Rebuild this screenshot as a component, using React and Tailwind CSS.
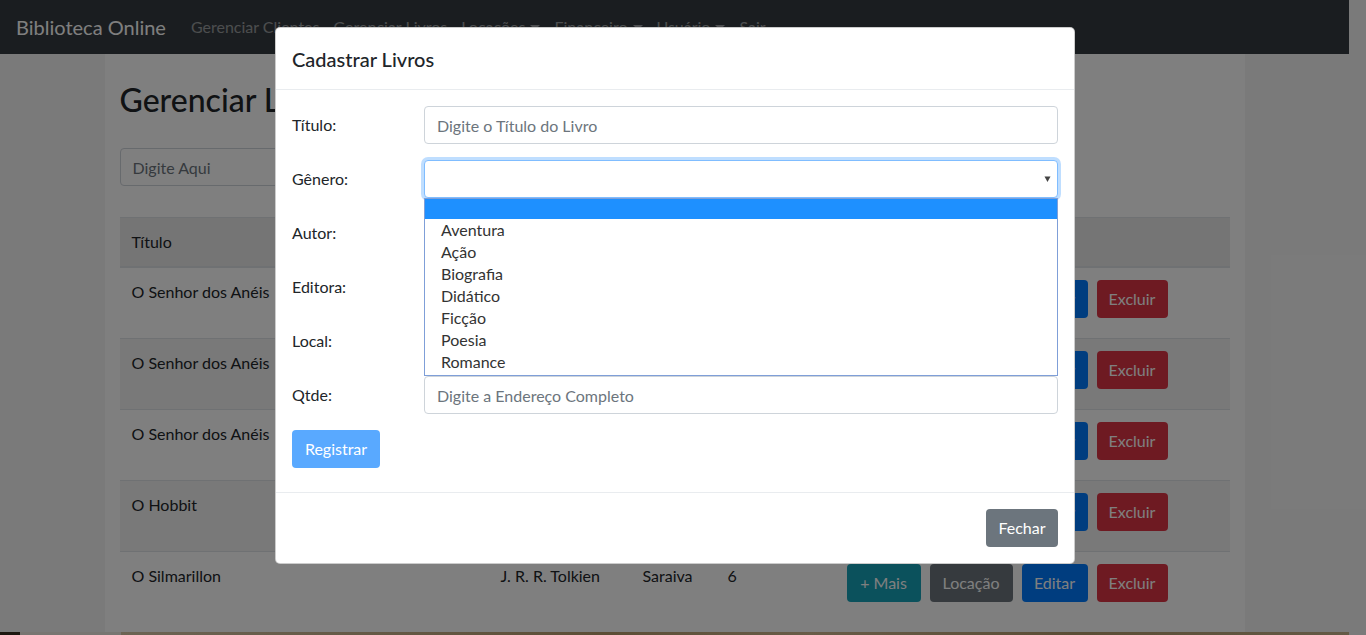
export default function App() {
  const rows = [
    { t: 'O Senhor dos Anéis', a: 'J. R. R. Tolkien', e: 'Saraiva', q: '6', striped: false },
    { t: 'O Senhor dos Anéis', a: 'J. R. R. Tolkien', e: 'Saraiva', q: '6', striped: true },
    { t: 'O Senhor dos Anéis', a: 'J. R. R. Tolkien', e: 'Saraiva', q: '6', striped: false },
    { t: 'O Hobbit', a: 'J. R. R. Tolkien', e: 'Saraiva', q: '6', striped: true },
    { t: 'O Silmarillon', a: 'J. R. R. Tolkien', e: 'Saraiva', q: '6', striped: false },
  ];
  const generos = ['Aventura', 'Ação', 'Biografia', 'Didático', 'Ficção', 'Poesia', 'Romance'];
  const caret = (
    <span className="inline-block ml-[5px] align-[3px] w-0 h-0 border-t-[5px] border-x-[5px] border-b-0 border-t-current border-x-transparent" />
  );
  const inputCls =
    'w-full h-[38px] rounded-[4px] border border-[#ced4da] bg-white px-3 text-[16px] text-[#495057] placeholder:text-[#6c757d] outline-none';

  return (
    <div className="relative h-[635px] overflow-hidden bg-[#f5f5f5] font-['Lato',sans-serif] text-[16px] text-[#212529]">
      {/* page */}
      <div className="w-[1349px] flex flex-col h-full">
        <nav className="h-[54px] shrink-0 bg-[#343a40] flex items-center pl-4">
          <span className="text-[20px] text-white mr-[25px]">Biblioteca Online</span>
          <div className="flex items-center gap-[14px] text-[16px] text-white/50">
            <span>Gerenciar Clientes</span>
            <span>Gerenciar Livros</span>
            <span>Locações{caret}</span>
            <span>Financeiro{caret}</span>
            <span>Usuário{caret}</span>
            <span>Sair</span>
          </div>
        </nav>
        <div className="mx-auto w-[1140px] h-[578px] shrink-0 bg-white px-[15px] pt-[27px]">
          <h1 className="text-[32px] font-medium leading-[1.2] text-[#212529]">Gerenciar Livros</h1>
          <div className="mt-[29px] flex gap-2">
            <input className={inputCls + ' !w-[500px]'} placeholder="Digite Aqui" />
          </div>
          <table className="mt-[31px] w-[1110px] table-fixed border-collapse">
            <colgroup>
              <col className="w-[369px]" />
              <col className="w-[142px]" />
              <col className="w-[85px]" />
              <col className="w-[119px]" />
              <col className="w-[395px]" />
            </colgroup>
            <thead>
              <tr className="bg-[#ebebeb] border-t border-[#dee2e6] border-b-2">
                <th className="px-3 py-3 text-left font-normal leading-6">Título</th>
                <th className="px-3 py-3 text-left font-normal leading-6">Autor</th>
                <th className="px-3 py-3 text-left font-normal leading-6">Editora</th>
                <th className="px-3 py-3 text-left font-normal leading-6">Qtde</th>
                <th className="px-3 py-3 text-left font-normal leading-6"></th>
              </tr>
            </thead>
            <tbody>
              {rows.map((r, i) => (
                <tr key={i} className={'border-t border-[#dee2e6] ' + (r.striped ? 'bg-[#f2f2f2]' : '')}>
                  <td className="px-3 pt-3 align-top leading-6">{r.t}</td>
                  <td className="px-3 pt-3 align-top leading-6">{r.a}</td>
                  <td className="px-3 pt-3 align-top leading-6">{r.e}</td>
                  <td className="px-3 pt-3 align-top leading-6">{r.q}</td>
                  <td className="px-3 pt-[12px] pb-[20px] align-top">
                    <div className="flex gap-[9px] text-white leading-6">
                      <span className="h-[38px] w-[74px] flex items-center justify-center rounded-[4px] bg-[#17a2b8]">+ Mais</span>
                      <span className="h-[38px] w-[83px] flex items-center justify-center rounded-[4px] bg-[#6c757d]">Locação</span>
                      <span className="h-[38px] w-[66px] flex items-center justify-center rounded-[4px] bg-[#007bff]">Editar</span>
                      <span className="h-[38px] w-[71px] flex items-center justify-center rounded-[4px] bg-[#dc3545]">Excluir</span>
                    </div>
                  </td>
                </tr>
              ))}
            </tbody>
          </table>
        </div>
        <div className="h-[20px] shrink-0 bg-[linear-gradient(90deg,#3a2e20_0%,#3a2e20_1.5%,#f0ece4_1.5%,#f0ece4_9%,#d8c8a8_9%,#c8b088_30%,#b89c6c_45%,#d0b890_60%,#b49a6a_80%,#c8b48c_100%)]" />
      </div>

      {/* backdrop */}
      <div className="absolute inset-0 bg-black/50" />

      {/* modal */}
      <div className="absolute left-[275px] top-[27px] w-[800px] rounded-[5px] border border-black/20 bg-white">
        <div className="h-[62px] px-4 flex items-center border-b border-[#e9ecef]">
          <h5 className="text-[20px] font-medium leading-[1.5]">Cadastrar Livros</h5>
        </div>
        <div className="px-4 pt-4 pb-6">
          <div className="relative flex flex-col gap-4">
            <div className="flex items-center">
              <label className="w-[132px] shrink-0">Título:</label>
              <input className={inputCls} placeholder="Digite o Título do Livro" />
            </div>
            <div className="flex items-center">
              <label className="w-[132px] shrink-0">Gênero:</label>
              <div className="relative flex-1">
                <div className="h-[38px] rounded-[4px] border border-[#80bdff] bg-white shadow-[0_0_0_3px_rgba(0,123,255,0.25)] flex items-center justify-end pr-[6px]">
                  <svg width="7" height="8" viewBox="0 0 7 8">
                    <polygon points="0.5,1.5 6.5,1.5 3.5,7" fill="#444" />
                  </svg>
                </div>
                <div className="absolute left-0 right-0 top-[38px] z-10 border border-[#7f9fd8] bg-white pb-[2px] text-[#333]">
                  <div className="h-[20px] bg-[#1e90ff]" />
                  {generos.map((g) => (
                    <div key={g} className="h-[22px] pl-4 leading-[22px]">{g}</div>
                  ))}
                </div>
              </div>
            </div>
            <div className="flex items-center">
              <label className="w-[132px] shrink-0">Autor:</label>
              <input className={inputCls} placeholder="Digite o Autor" />
            </div>
            <div className="flex items-center">
              <label className="w-[132px] shrink-0">Editora:</label>
              <input className={inputCls} placeholder="Digite a Editora" />
            </div>
            <div className="flex items-center">
              <label className="w-[132px] shrink-0">Local:</label>
              <input className={inputCls} placeholder="Digite o Local" />
            </div>
            <div className="flex items-center">
              <label className="w-[132px] shrink-0">Qtde:</label>
              <input className={inputCls} placeholder="Digite a Endereço Completo" />
            </div>
            <div>
              <span className="inline-flex h-[38px] w-[88px] items-center justify-center rounded-[4px] bg-[#59a9ff] text-white">Registrar</span>
            </div>
          </div>
        </div>
        <div className="border-t border-[#e9ecef] p-4 flex justify-end">
          <span className="inline-flex h-[38px] w-[72px] items-center justify-center rounded-[4px] bg-[#6c757d] text-white">Fechar</span>
        </div>
      </div>
    </div>
  );
}
